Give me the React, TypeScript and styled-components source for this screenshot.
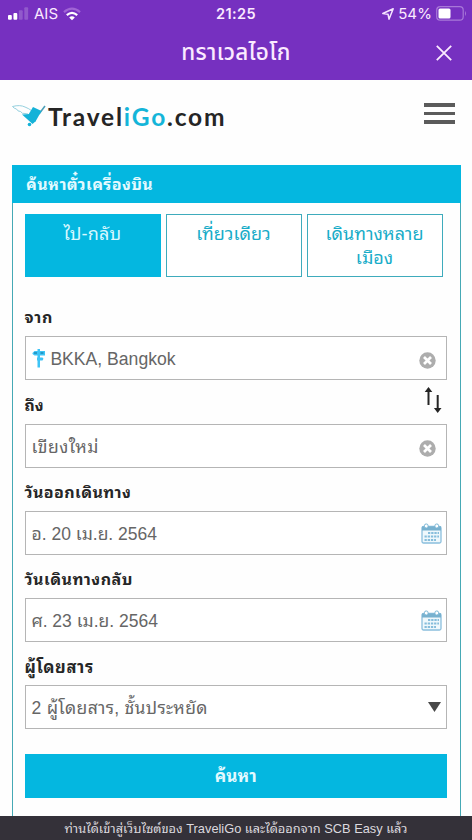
import React from "react";
import styled, { createGlobalStyle } from "styled-components";

const GlobalStyle = createGlobalStyle`
  * { box-sizing: border-box; }
  body { margin: 0; background: #fff; overflow: hidden; }
`;

const Screen = styled.div`
  width: 472px;
  height: 840px;
  display: flex;
  flex-direction: column;
  overflow: hidden;
  background: #fefefe;
  font-family: "Liberation Sans", "Noto Sans Thai Looped", "Loma", "Garuda", "Waree", "Noto Sans Thai", "Noto Sans", sans-serif;
`;

const Label = styled.span<{ $size: number; $spacing?: number; $weight?: number; $shift?: number }>`
  font-size: ${(p) => p.$size}px;
  letter-spacing: ${(p) => p.$spacing ?? 0}px;
  font-weight: ${(p) => p.$weight ?? 400};
  margin-top: ${(p) => p.$shift ?? 0}px;
  line-height: 24px;
  white-space: nowrap;
`;

const Top = styled.header`
  flex: none;
  height: 80px;
  background: #7630c0;
  color: #fbeaff;
`;

const StatusBar = styled.div`
  height: 27px;
  display: grid;
  grid-template-columns: 1fr 60px 1fr;
  align-items: center;
  justify-items: center;
  font-family: Inter, sans-serif;
`;

const StatusGroup = styled.div<{ $end?: boolean }>`
  display: flex;
  align-items: center;
  gap: ${(p) => (p.$end ? 4 : 5)}px;
  justify-self: ${(p) => (p.$end ? "end" : "start")};
  padding: ${(p) => (p.$end ? "0 5px 0 0" : "0 0 0 8px")};
`;

const TitleBar = styled.div`
  height: 53px;
  display: grid;
  grid-template-columns: 56px 1fr 56px;
  align-items: center;
  justify-items: center;
  padding-bottom: 2px;
`;

const Title = styled.div`
  grid-column: 2;
  display: flex;
  font-family: "Noto Sans Thai", "Liberation Sans", sans-serif;
`;

const Brand = styled.div`
  flex: none;
  height: 85px;
  display: flex;
  justify-content: space-between;
  padding: 21px 17px 0 12px;
`;

const Logo = styled.div`
  display: flex;
  height: 34px;
`;

const LogoText = styled.div`
  font-family: Lato, sans-serif;
  font-weight: 700;
  font-size: 24.5px;
  line-height: 32px;
  letter-spacing: 1.8px;
  color: #252525;
  b { font-weight: 700; color: #14b5d9; }
`;

const Burger = styled.div`
  display: grid;
  gap: 5px;
  align-content: start;
  width: 31px;
  padding-top: 2px;
  i { height: 3.5px; background: #5b5b5b; }
`;

const Panel = styled.main`
  flex: 1;
  min-height: 0;
  margin: 0 11px 0 12px;
  border: solid #45a9b5;
  border-width: 0 1.5px;
`;

const PanelHead = styled.h1`
  margin: 0 -1px;
  height: 38px;
  display: flex;
  align-items: center;
  padding-left: 14px;
  background: #04b7e0;
  color: #e3faff;
`;

const Form = styled.div`
  padding: 11px 13px 0 11.5px;
`;

const Tabs = styled.div`
  display: grid;
  grid-template-columns: repeat(3, 136px);
  column-gap: 5px;
  height: 63px;
`;

const Tab = styled.div<{ $active?: boolean }>`
  display: flex;
  flex-direction: column;
  align-items: center;
  padding-top: 7px;
  border: 1.5px solid ${(p) => (p.$active ? "#04b7e0" : "#3eabbc")};
  background: ${(p) => (p.$active ? "#04b7e0" : "#fff")};
  color: ${(p) => (p.$active ? "#d8f8ff" : "#18acc8")};
`;

const FieldName = styled.div<{ $height: number }>`
  height: ${(p) => p.$height}px;
  display: flex;
  justify-content: space-between;
  align-items: flex-end;
  padding: 0 4px 6px 0;
  color: #262626;
`;

const SwapSlot = styled.div`
  display: flex;
  padding-bottom: 4px;
`;

const Field = styled.div<{ $right?: number }>`
  height: 44px;
  display: flex;
  align-items: center;
  padding: 1px ${(p) => p.$right ?? 10}px 0 6px;
  border: 1.5px solid #b5b5b5;
  background: #fff;
  color: #666;
  > :last-child { margin-left: auto; }
`;

const ClearSlot = styled.div`
  display: flex;
  padding-top: 3px;
`;

const Submit = styled.div`
  height: 44px;
  margin-top: 25px;
  display: flex;
  align-items: center;
  justify-content: center;
  padding-top: 2px;
  background: #04b7e0;
  color: #e3faff;
`;

const Footer = styled.footer`
  flex: none;
  height: 24px;
  display: flex;
  justify-content: center;
  padding-top: 1px;
  background: #343139;
  color: #dcd9df;
`;

const Signal = () => (
  <svg width="21" height="14" viewBox="0 0 22 14" fill="#fff">
    <rect x="0" y="8" width="4" height="5" rx="1" />
    <rect x="5.7" y="6" width="4" height="7" rx="1" />
    <rect x="11.4" y="3" width="4" height="10" rx="1" opacity=".2" />
    <rect x="17.1" y="0" width="4" height="13" rx="1" opacity=".2" />
  </svg>
);

const Wifi = () => (
  <svg width="18" height="14" viewBox="0 0 19 14" fill="none" strokeWidth="2.3">
    <path d="M1 5Q9.5-2.3 18 5" stroke="#a064d5" />
    <path d="M4 8.2Q9.5 3.3 15 8.2" stroke="#fff" />
    <path d="M6.5 10.6Q9.5 8.3 12.5 10.6L9.5 13.7Z" fill="#fff" />
  </svg>
);

const Arrow = () => (
  <svg width="12" height="12" viewBox="0 0 12 12" fill="none" stroke="#f5e4ff" strokeWidth="1.5" strokeLinejoin="round">
    <path d="M.8 5.5 11.2.8 7 11.2 6 6.2Z" />
  </svg>
);

const Battery = () => (
  <svg width="31" height="15" viewBox="0 0 31 15">
    <rect x=".7" y=".7" width="26.5" height="13.5" rx="3.5" fill="none" stroke="#a878d8" strokeWidth="1.2" />
    <rect x="2.5" y="2.5" width="12" height="10" rx="1.5" fill="#fff" />
    <path d="M29 5q2 2.5 0 5z" fill="#a878d8" />
  </svg>
);

const Bird = () => (
  <svg width="36" height="30" viewBox="0 0 36 30">
    <g fill="none" stroke="#8acbda" strokeWidth=".9">
      <path d="M.5 5.5Q8 3.5 13 6Q17 7.5 20 10M.5 5.5Q2 7.5 4.5 8Q5.500 10.500 8.500 10.500Q10 13 13 12.500L16 13" />
      <path d="m27 13 6-8" stroke="#4b9eb7" strokeWidth="1.600" />
    </g>
    <path d="m21 6 8.500 4-6 10.500-8.500-4.500Z" fill="#15b2d8" />
    <path d="m10 13.500 8-.5 6 7-3.500 3Z" fill="#15b2d8" />
    <circle cx="17.500" cy="23.500" r="1.800" fill="#15b2d8" />
  </svg>
);

const Signpost = () => (
  <svg width="14" height="19" viewBox="0 0 14 19" fill="#3ec4f6">
    <path d="M5.500 0h2.500v18.500H5.500zM.5 4 2.500 2H13v4.500H2.500L.5 5zM5 8.500h5.500l1 1.300-1 1.700H5z" />
    <path d="M2 4h3m3.500 0h3" stroke="#1c8cb9" strokeWidth="1.500" />
  </svg>
);

const Clear = () => (
  <ClearSlot>
    <svg width="17" height="17" viewBox="0 0 17 17">
      <circle cx="8.5" cy="8.5" r="8.2" fill="#adadad" />
      <path d="m5 5 7 7m0-7-7 7" stroke="#fff" strokeWidth="2.7" />
    </svg>
  </ClearSlot>
);

const Calendar = () => (
  <svg width="21" height="21" viewBox="0 0 21 21">
    <rect x="1" y="3.5" width="19" height="16.5" rx="1.5" fill="#eff8fc" stroke="#8bbfdd" strokeWidth="1.3" />
    <path d="M1 3.5h19v4H1z" fill="#77b1cf" />
    <rect x="3.5" y="1" width="3.5" height="4" rx="1.5" fill="#fff" stroke="#79b5d4" />
    <rect x="14" y="1" width="3.5" height="4" rx="1.5" fill="#fff" stroke="#79b5d4" />
    <path d="M7 10h11M3.5 13.5H18M3.5 17H15" stroke="#86bddb" strokeWidth="2.1" strokeDasharray="2.3 .9" />
  </svg>
);

const Swap = () => (
  <SwapSlot>
    <svg width="19" height="27" viewBox="0 0 19 27" fill="#252525">
      <path d="M4.5 0 8.3 5H5.5V18H3.5V5H.7ZM12.7 8H14.7V21H17.5L13.7 26 9.9 21H12.7Z" />
    </svg>
  </SwapSlot>
);

export default function App() {
  return (
    <>
      <GlobalStyle />
      <Screen>
        <Top>
          <StatusBar>
            <StatusGroup>
              <Signal />
              <Label $size={15}>AIS</Label>
              <Wifi />
            </StatusGroup>
            <Label $size={14.5} $weight={600} $spacing={0.4}>21:25</Label>
            <StatusGroup $end>
              <Arrow />
              <Label $size={15} $spacing={0.1}>54%</Label>
              <Battery />
            </StatusGroup>
          </StatusBar>
          <TitleBar>
            <Title><Label $size={22.5} $spacing={0.3} $weight={500}>ทราเวลไอโก</Label></Title>
            <svg width="16" height="16" viewBox="0 0 16 16" stroke="#fbeaff" strokeWidth="1.8">
              <path d="m.8.8 14.4 14.4m0-14.4L.8 15.2" />
            </svg>
          </TitleBar>
        </Top>
        <Brand>
          <Logo>
            <Bird />
            <LogoText>Travel<b>iGo</b>.com</LogoText>
          </Logo>
          <Burger><i /><i /><i /></Burger>
        </Brand>
        <Panel>
          <PanelHead><Label $size={16} $spacing={0.4} $weight={700} $shift={1}>ค้นหาตั๋วเครื่องบิน</Label></PanelHead>
          <Form>
            <Tabs>
              <Tab $active><Label $size={18} $spacing={0.2}>ไป-กลับ</Label></Tab>
              <Tab><Label $size={18}>เที่ยวเดียว</Label></Tab>
              <Tab><Label $size={18}>เดินทางหลาย</Label><Label $size={18}>เมือง</Label></Tab>
            </Tabs>
            <FieldName $height={59}><Label $size={16} $spacing={0.7} $weight={700}>จาก</Label></FieldName>
            <Field>
              <Signpost />
              <Label $size={17.6}>&nbsp;BKKA, Bangkok</Label>
              <Clear />
            </Field>
            <FieldName $height={44}><Label $size={16} $weight={700}>ถึง</Label><Swap /></FieldName>
            <Field><Label $size={17.5} $spacing={0.45}>เขียงใหม่</Label><Clear /></Field>
            <FieldName $height={43}><Label $size={16} $spacing={0.4} $weight={700}>วันออกเดินทาง</Label></FieldName>
            <Field $right={4}><Label $size={17.5}>อ. 20 เม.ย. 2564</Label><Calendar /></Field>
            <FieldName $height={43}><Label $size={16} $spacing={0.5} $weight={700}>วันเดินทางกลับ</Label></FieldName>
            <Field $right={4}><Label $size={17.5}>ศ. 23 เม.ย. 2564</Label><Calendar /></Field>
            <FieldName $height={43}><Label $size={16.5} $spacing={0.6} $weight={700}>ผู้โดยสาร</Label></FieldName>
            <Field $right={5}>
              <Label $size={17.5} $spacing={0.3}>2 ผู้โดยสาร, ชั้นประหยัด</Label>
              <svg width="13" height="12" viewBox="0 -1 13 12"><path d="M0-1h13L6.5 9Z" fill="#484848" /></svg>
            </Field>
            <Submit><Label $size={17} $spacing={0.1} $weight={700}>ค้นหา</Label></Submit>
          </Form>
        </Panel>
        <Footer><Label $size={12.8}>ท่านได้เข้าสู่เว็บไซต์ของ TraveliGo และได้ออกจาก SCB Easy แล้ว</Label></Footer>
      </Screen>
    </>
  );
}
